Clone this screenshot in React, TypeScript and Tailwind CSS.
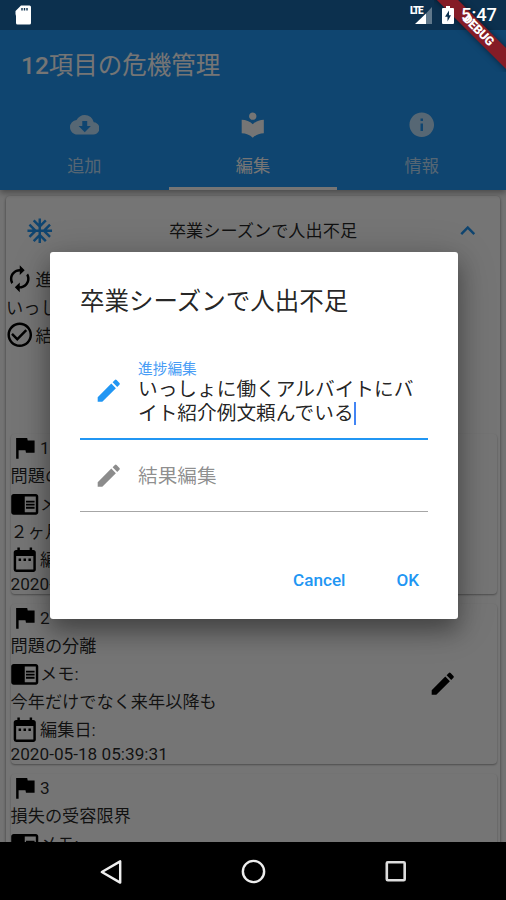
import { clsx } from 'clsx'
import type { ReactNode } from 'react'
import {
  MdAcUnit,
  MdAutorenew,
  MdCheckCircleOutline,
  MdChromeReaderMode,
  MdCloudDownload,
  MdDateRange,
  MdEdit,
  MdExpandLess,
  MdFlag,
  MdInfo,
  MdLocalLibrary,
} from 'react-icons/md'

const ICON = 'size-[29.5px] shrink-0'
const ROW_ICON = 'mr-px -ml-px -mt-[2px] size-[29.5px] shrink-0 text-black'

const TABS = [
  { label: '追加', icon: MdCloudDownload, active: false },
  { label: '編集', icon: MdLocalLibrary, active: true },
  { label: '情報', icon: MdInfo, active: false },
]

const ITEMS = [
  { id: 1, title: '問題の特定', memo: '２ヶ月', date: '2020-05-18 05:38:12' },
  { id: 2, title: '問題の分離', memo: '今年だけでなく来年以降も', date: '2020-05-18 05:39:31' },
  { id: 3, title: '損失の受容限界', memo: '', date: '' },
]

function StatusIcons() {
  return (
    <div className="absolute inset-x-0 top-0 z-30 flex h-[30px] items-center text-white">
      <svg viewBox="0 0 16 20" className="ml-[15px] h-5 w-4">
        <path
          fill="currentColor"
          d="M6 .5h8.5A1.5 1.5 0 0 1 16 2v16a1.5 1.5 0 0 1-1.5 1.5h-12A1.5 1.5 0 0 1 1 18v-7L.5 9V6z"
        />
        <path stroke="#0c304e" strokeWidth="1.4" d="M7 3v2.500M9.500 3v2.500M12 3v2.500" />
      </svg>
      <div className="ml-auto flex items-center pr-[9px]">
        <div className="relative h-5 w-[23px]">
          <svg viewBox="0 0 23 20" className="size-full">
            <path fill="currentColor" fillOpacity=".35" d="M16 8.500 22 2v17h-6z" />
            <path fill="currentColor" d="M5 19 16 8.500V19z" />
          </svg>
          <span className="absolute top-0 left-0 text-[10px] leading-[11px] font-black tracking-[-1.400px]">
            LTE
          </span>
        </div>
        <svg viewBox="0 0 12 18" className="ml-[9px] h-[18px] w-3">
          <path
            fill="currentColor"
            d="M4 0h4v2h3q1 0 1 1v14q0 1-1 1H1q-1 0-1-1V3q0-1 1-1h3z"
          />
          <path fill="#0c304e" d="M7 4.500 3 10.800h2.500V15.500L9 9.200H7z" />
        </svg>
        <span className="mt-px ml-[7px] text-[18.300px] leading-none font-medium">5:47</span>
      </div>
    </div>
  )
}

function DebugBanner() {
  return (
    <div className="absolute top-0 right-0 z-20 size-[72px] overflow-hidden">
      <div className="absolute top-[22px] left-[-17px] flex h-[15px] w-[120px] rotate-45 items-center justify-center bg-[#851c26] text-[12.300px] leading-none font-black tracking-[-0.3px] text-white shadow-[0_0_6px_rgba(0,0,0,0.5)]">
        <span className="pl-[3px]">DEBUG</span>
      </div>
    </div>
  )
}

function Header() {
  return (
    <header className="relative z-10 bg-[#2196f3] text-white shadow-[0_3px_6px_rgba(0,0,0,0.35)]">
      <div className="h-[30px] bg-[#1b69aa]" />
      <h1 className="flex h-[69px] items-center pt-[4px] pl-[21px] text-[24.500px]">
        <span className="font-medium">12</span>項目の危機管理
      </h1>
      <nav className="flex h-[91px]">
        {TABS.map(({ label, icon: Icon, active }) => (
          <div
            key={label}
            className={clsx(
              'flex flex-1 flex-col items-center border-b-[3px] pt-[11px] text-[17.200px]',
              active ? 'border-white' : 'border-transparent text-white/70',
            )}
          >
            <Icon className={ICON} />
            <span className="mt-[14px] leading-[25px]">{label}</span>
          </div>
        ))}
      </nav>
    </header>
  )
}

function IconRow({ icon, children }: { icon: ReactNode; children: ReactNode }) {
  return (
    <div className="flex h-[29.500px] items-center">
      {icon}
      <span className="pt-[2px]">{children}</span>
    </div>
  )
}

function ItemCard({ item }: { item: (typeof ITEMS)[number] }) {
  return (
    <div className="flex h-[160.500px] shrink-0 items-center rounded-[4px] bg-white shadow-[0_1px_2px_rgba(0,0,0,0.35)]">
      <div className="flex-1">
        <IconRow icon={<MdFlag className={ROW_ICON} />}>{item.id}</IconRow>
        <p className="h-[26.500px] leading-[27px]">{item.title}</p>
        <IconRow icon={<MdChromeReaderMode className={ROW_ICON} />}>メモ:</IconRow>
        <p className="h-[26.500px] leading-[26.500px]">{item.memo}</p>
        <IconRow icon={<MdDateRange className={ROW_ICON} />}>編集日:</IconRow>
        <p className="h-[19px] leading-[18px]">{item.date}</p>
      </div>
      <MdEdit className={clsx(ICON, 'mr-10 text-black')} />
    </div>
  )
}

function Board() {
  return (
    <main className="mx-1.5 mt-1.5 rounded-[4px] bg-white text-[17.200px] text-black/85 shadow-[0_1px_3px_rgba(0,0,0,0.5)]">
      <div className="flex h-[69px] items-center pr-[18px] pl-[19px]">
        <MdAcUnit className={clsx(ICON, 'text-[#2196f3]')} />
        <span className="flex-1 pt-[2px] pl-[19px] text-center">卒業シーズンで人出不足</span>
        <MdExpandLess className={clsx(ICON, 'text-[#2196f3]')} />
      </div>
      <IconRow icon={<MdAutorenew className={ROW_ICON} />}>進捗:</IconRow>
      <p className="h-[26.500px] leading-[26.500px]">
        いっしょに働くアルバイトにバイト紹介例文頼んでいる
      </p>
      <IconRow icon={<MdCheckCircleOutline className={ROW_ICON} />}>結果:</IconRow>
      <div className="mt-[83px] flex flex-col gap-[9.500px] pr-[3px] pl-[4.500px]">
        {ITEMS.map((item) => (
          <ItemCard key={item.id} item={item} />
        ))}
      </div>
    </main>
  )
}

function EditDialog() {
  return (
    <div className="flex h-[367px] w-[408px] flex-col rounded-[3px] bg-white px-[30px] shadow-[0_12px_22px_rgba(0,0,0,0.32),0_6px_40px_rgba(0,0,0,0.2)]">
      <h2 className="mt-[31px] text-[24.500px] leading-[37px] text-black/87">
        卒業シーズンで人出不足
      </h2>
      <div className="mt-[39px] flex h-[81px] border-b-[2.500px] border-[#2196f3]">
        <MdEdit className="mt-[17px] ml-[14px] size-[29.500px] shrink-0 text-[#2196f3]" />
        <div className="ml-[14.500px]">
          <p className="mt-[2px] text-[14.700px] leading-[17px] text-[#4a9df5]">進捗編集</p>
          <p className="text-[19.700px] leading-[24px] whitespace-nowrap text-black/87">
            いっしょに働くアルバイトにバ
            <br />
            イト紹介例文頼んでいる
            <span className="inline-block h-[23px] w-[2.500px] bg-[#4285f4] align-[-5px]" />
          </p>
        </div>
      </div>
      <div className="flex h-[72px] items-center border-b border-black/35">
        <MdEdit className="ml-[14px] size-[29.500px] shrink-0 text-black/45" />
        <span className="ml-[14.500px] pt-[3px] text-[19.700px] text-black/45">結果編集</span>
      </div>
      <div className="mt-[50px] flex justify-end gap-[51px] pr-[9px] text-[17.100px] leading-[36px] font-medium text-[#2196f3]">
        <button>Cancel</button>
        <button>OK</button>
      </div>
    </div>
  )
}

function SystemNav() {
  return (
    <footer className="relative z-20 flex h-[58px] items-center justify-center gap-[113px] bg-black">
      <svg viewBox="0 0 30 30" className="size-[29px]" fill="none" stroke="#eee" strokeWidth="2.500">
        <path strokeLinejoin="round" d="M24 4.500v22L5 15.500z" />
      </svg>
      <svg viewBox="0 0 30 30" className="size-[29px]" fill="none" stroke="#eee" strokeWidth="2.500">
        <circle cx="15" cy="15" r="11" />
      </svg>
      <svg viewBox="0 0 30 30" className="size-[29px]" fill="none" stroke="#ddd" strokeWidth="2.700">
        <rect x="6" y="5.500" width="18.500" height="18.500" rx="1" />
      </svg>
    </footer>
  )
}

export default function App() {
  return (
    <div className="relative flex h-[900px] w-[506px] flex-col overflow-hidden bg-black font-[Roboto,'Noto_Sans_CJK_JP',sans-serif]">
      <div className="h-[842px] overflow-hidden bg-[#fafafa]">
        <Header />
        <Board />
      </div>
      <SystemNav />
      <div className="absolute inset-x-0 top-0 z-10 flex h-[842px] justify-center bg-black/54 pt-[252px] pl-[2px]">
        <EditDialog />
      </div>
      <DebugBanner />
      <StatusIcons />
    </div>
  )
}
